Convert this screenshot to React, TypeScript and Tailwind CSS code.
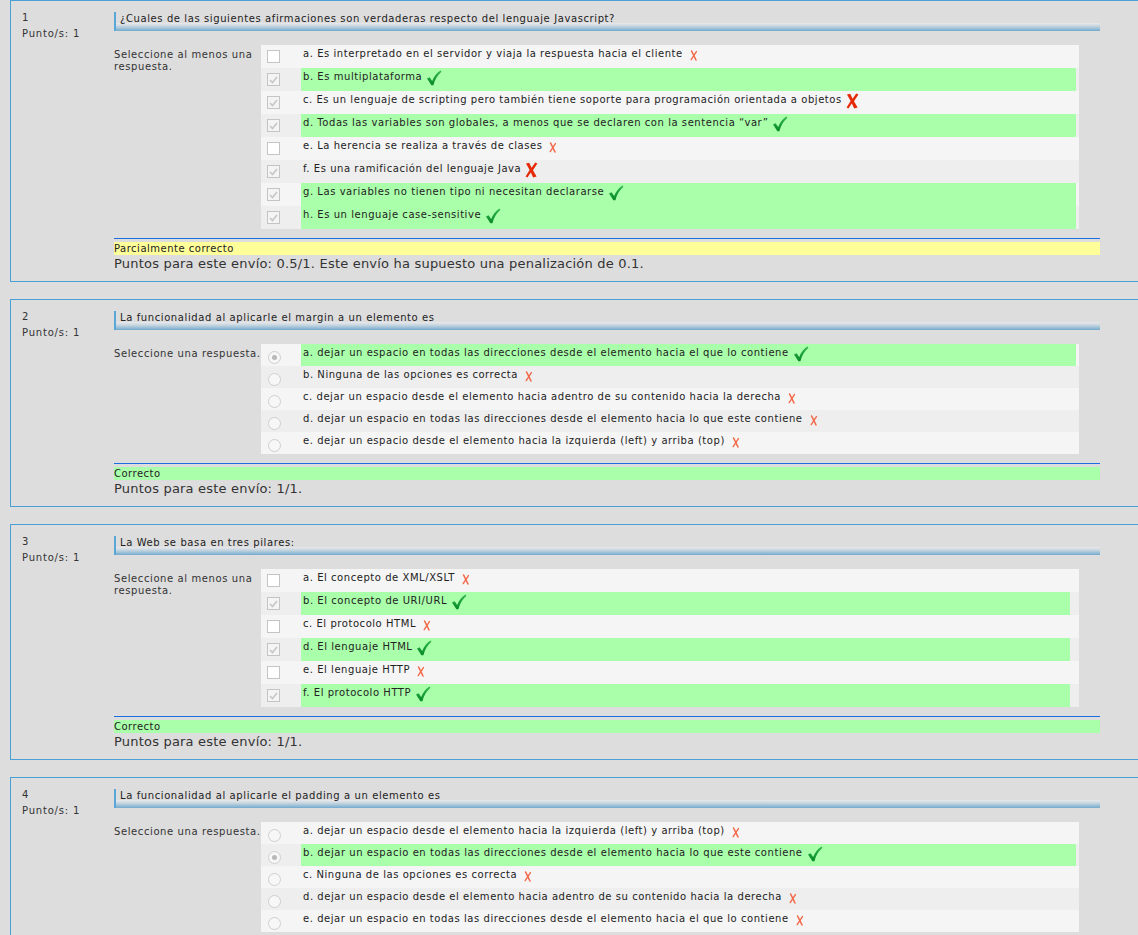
import React from 'react';

type Mark = 'ok' | 'bigx' | 'x';

interface Option {
  label: string;
  checked: boolean;
  mark: Mark;
  right?: boolean;
}

interface Question {
  num: number;
  text: string;
  multi: boolean;
  options: Option[];
  state: string;
  partial?: boolean;
  points: string;
  narrowGreen?: boolean;
}

const questions: Question[] = [
  {
    num: 1,
    text: '¿Cuales de las siguientes afirmaciones son verdaderas respecto del lenguaje Javascript?',
    multi: true,
    options: [
      { label: 'a. Es interpretado en el servidor y viaja la respuesta hacia el cliente', checked: false, mark: 'x' },
      { label: 'b. Es multiplataforma', checked: true, mark: 'ok', right: true },
      { label: 'c. Es un lenguaje de scripting pero también tiene soporte para programación orientada a objetos', checked: true, mark: 'bigx' },
      { label: 'd. Todas las variables son globales, a menos que se declaren con la sentencia “var”', checked: true, mark: 'ok', right: true },
      { label: 'e. La herencia se realiza a través de clases', checked: false, mark: 'x' },
      { label: 'f. Es una ramificación del lenguaje Java', checked: true, mark: 'bigx' },
      { label: 'g. Las variables no tienen tipo ni necesitan declararse', checked: true, mark: 'ok', right: true },
      { label: 'h. Es un lenguaje case-sensitive', checked: true, mark: 'ok', right: true },
    ],
    state: 'Parcialmente correcto',
    partial: true,
    points: 'Puntos para este envío: 0.5/1. Este envío ha supuesto una penalización de 0.1.',
  },
  {
    num: 2,
    text: 'La funcionalidad al aplicarle el margin a un elemento es',
    multi: false,
    options: [
      { label: 'a. dejar un espacio en todas las direcciones desde el elemento hacia el que lo contiene', checked: true, mark: 'ok', right: true },
      { label: 'b. Ninguna de las opciones es correcta', checked: false, mark: 'x' },
      { label: 'c. dejar un espacio desde el elemento hacia adentro de su contenido hacia la derecha', checked: false, mark: 'x' },
      { label: 'd. dejar un espacio en todas las direcciones desde el elemento hacia lo que este contiene', checked: false, mark: 'x' },
      { label: 'e. dejar un espacio desde el elemento hacia la izquierda (left) y arriba (top)', checked: false, mark: 'x' },
    ],
    state: 'Correcto',
    points: 'Puntos para este envío: 1/1.',
  },
  {
    num: 3,
    text: 'La Web se basa en tres pilares:',
    multi: true,
    narrowGreen: true,
    options: [
      { label: 'a. El concepto de XML/XSLT', checked: false, mark: 'x' },
      { label: 'b. El concepto de URI/URL', checked: true, mark: 'ok', right: true },
      { label: 'c. El protocolo HTML', checked: false, mark: 'x' },
      { label: 'd. El lenguaje HTML', checked: true, mark: 'ok', right: true },
      { label: 'e. El lenguaje HTTP', checked: false, mark: 'x' },
      { label: 'f. El protocolo HTTP', checked: true, mark: 'ok', right: true },
    ],
    state: 'Correcto',
    points: 'Puntos para este envío: 1/1.',
  },
  {
    num: 4,
    text: 'La funcionalidad al aplicarle el padding a un elemento es',
    multi: false,
    options: [
      { label: 'a. dejar un espacio desde el elemento hacia la izquierda (left) y arriba (top)', checked: false, mark: 'x' },
      { label: 'b. dejar un espacio en todas las direcciones desde el elemento hacia lo que este contiene', checked: true, mark: 'ok', right: true },
      { label: 'c. Ninguna de las opciones es correcta', checked: false, mark: 'x' },
      { label: 'd. dejar un espacio desde el elemento hacia adentro de su contenido hacia la derecha', checked: false, mark: 'x' },
      { label: 'e. dejar un espacio en todas las direcciones desde el elemento hacia el que lo contiene', checked: false, mark: 'x' },
    ],
    state: 'Correcto',
    points: 'Puntos para este envío: 1/1.',
  },
];

const Tick = () => (
  <svg width="16" height="16" viewBox="0 0 16 16" className="inline-block align-top ml-[4px] -mt-[1px]">
    <defs>
      <linearGradient id="tk" x1="0" y1="0" x2="0" y2="1">
        <stop offset="0" stopColor="#2fb848" />
        <stop offset="1" stopColor="#07892a" />
      </linearGradient>
    </defs>
    <path d="M1 8.5 L3.6 7.2 L6.2 11 C8 6.5 10.5 3 14.6 0.6 L15.4 1.8 C11.6 5 9 9.5 7.4 15.2 L5.4 15.2 Z" fill="url(#tk)" />
  </svg>
);

const BigCross = () => (
  <svg width="13" height="16" viewBox="0 0 13 16" className="inline-block align-top ml-[4px] -mt-[1px]">
    <path d="M1 1.5 L4.2 0.8 L6.6 5.8 L10.2 0.6 L12.4 1.6 L8 8.2 L11.6 14.6 L8.2 15.4 L5.8 10.6 L2.4 15.6 L0.6 14.4 L4.6 8 Z" fill="#e52a08" />
  </svg>
);

const SmallCross = () => (
  <svg width="8" height="11" viewBox="0 0 8 11" className="inline-block align-top ml-[7px] mt-[2px]">
    <path d="M1.6 1 L6 10" stroke="#f26a4a" strokeWidth="1.6" strokeLinecap="round" />
    <path d="M6.4 1.6 L1.2 9.6" stroke="#f26a4a" strokeWidth="1.4" strokeLinecap="round" />
  </svg>
);

const CheckBox = ({ checked }: { checked: boolean }) => (
  <div
    className={`w-[13px] h-[13px] border border-[#c4c4c4] flex items-center justify-center ${
      checked ? 'bg-[#f4f4f4]' : 'bg-white'
    }`}
  >
    {checked && (
      <svg width="9" height="8" viewBox="0 0 9 8">
        <path d="M1 4 L3.5 6.5 L8 1" stroke="#c6c6c6" strokeWidth="1.6" fill="none" />
      </svg>
    )}
  </div>
);

const Radio = ({ checked }: { checked: boolean }) => (
  <div className="w-[13px] h-[13px] rounded-full border border-[#cfcfcf] bg-[#f7f7f7] flex items-center justify-center">
    {checked && <div className="w-[5px] h-[5px] rounded-full bg-[#b9b9b9]" />}
  </div>
);

const QuestionBox = ({ q }: { q: Question }) => {
  return (
    <div className="ml-[10px] w-[1140px] border border-[#4a9fd5] pt-[11px] pb-[9px] pl-[11px] flex">
      <div className="w-[92px] shrink-0 -mt-[2px] text-[10px] leading-[16px] tracking-[0.8px] text-[#333]">
        <div>{q.num}</div>
        <div>Punto/s: 1</div>
      </div>
      <div className="w-[986px] shrink-0">
        <div className="border-l-2 border-[#5aa6d6] h-[19px] pl-[4px] bg-[linear-gradient(to_bottom,#dddddd_0px,#dddddd_11px,#e9e9ec_11px,#c9d6e0_14px,#95bdd6_17px,#72a9cd_19px)] text-[10px] leading-[14px] tracking-[0.6px] text-[#222]">
          {q.text}
        </div>
        <div className="flex mt-[14px]">
          <div className="w-[147px] shrink-0 text-[10px] leading-[12px] tracking-[0.6px] text-[#333] pt-[4px]">
            {q.multi ? 'Seleccione al menos una respuesta.' : 'Seleccione una respuesta.'}
          </div>
          <div className="w-[818px] shrink-0">
            {q.options.map((o, i) => (
              <div
                key={i}
                className={`flex pr-[3px] ${q.multi ? 'h-[23px]' : 'h-[22px]'} ${
                  i % 2 === 0 ? 'bg-[#f5f5f5]' : 'bg-[#eeeeee]'
                }`}
              >
                <div className={`w-[40px] shrink-0 ${q.multi ? 'pl-[6px] pt-[5px]' : 'pl-[7px] pt-[7px]'}`}>
                  {q.multi ? <CheckBox checked={o.checked} /> : <Radio checked={o.checked} />}
                </div>
                <div className="flex-1 flex">
                  <div
                    className={`${q.narrowGreen ? 'w-[769px]' : 'w-[775px]'} pl-[2px] pt-[3px] text-[10px] leading-[12px] tracking-[0.55px] text-[#222] whitespace-nowrap ${
                      o.right ? 'bg-[#aaffaa]' : ''
                    }`}
                  >
                    {o.label}
                    {o.mark === 'ok' && <Tick />}
                    {o.mark === 'bigx' && <BigCross />}
                    {o.mark === 'x' && <SmallCross />}
                  </div>
                </div>
              </div>
            ))}
          </div>
        </div>
        <div className="mt-[9px] border-t border-[#1a6ee0] pt-[3px]">
          <div
            className={`h-[13px] text-[10px] leading-[13px] tracking-[0.5px] text-[#222] ${
              q.partial ? 'bg-[#ffff99]' : 'bg-[#aaffaa]'
            }`}
          >
            {q.state}
          </div>
          <div className="text-[13px] leading-[16px] tracking-[0.2px] text-[#333] mt-[1px]">{q.points}</div>
        </div>
      </div>
    </div>
  );
};

export default function App() {
  return (
    <div
      className="w-[1138px] h-[935px] overflow-hidden bg-[#dddddd] flex flex-col gap-[17px]"
      style={{ fontFamily: '"DejaVu Sans", Verdana, sans-serif' }}
    >
      {questions.map((q) => (
        <QuestionBox key={q.num} q={q} />
      ))}
    </div>
  );
}
